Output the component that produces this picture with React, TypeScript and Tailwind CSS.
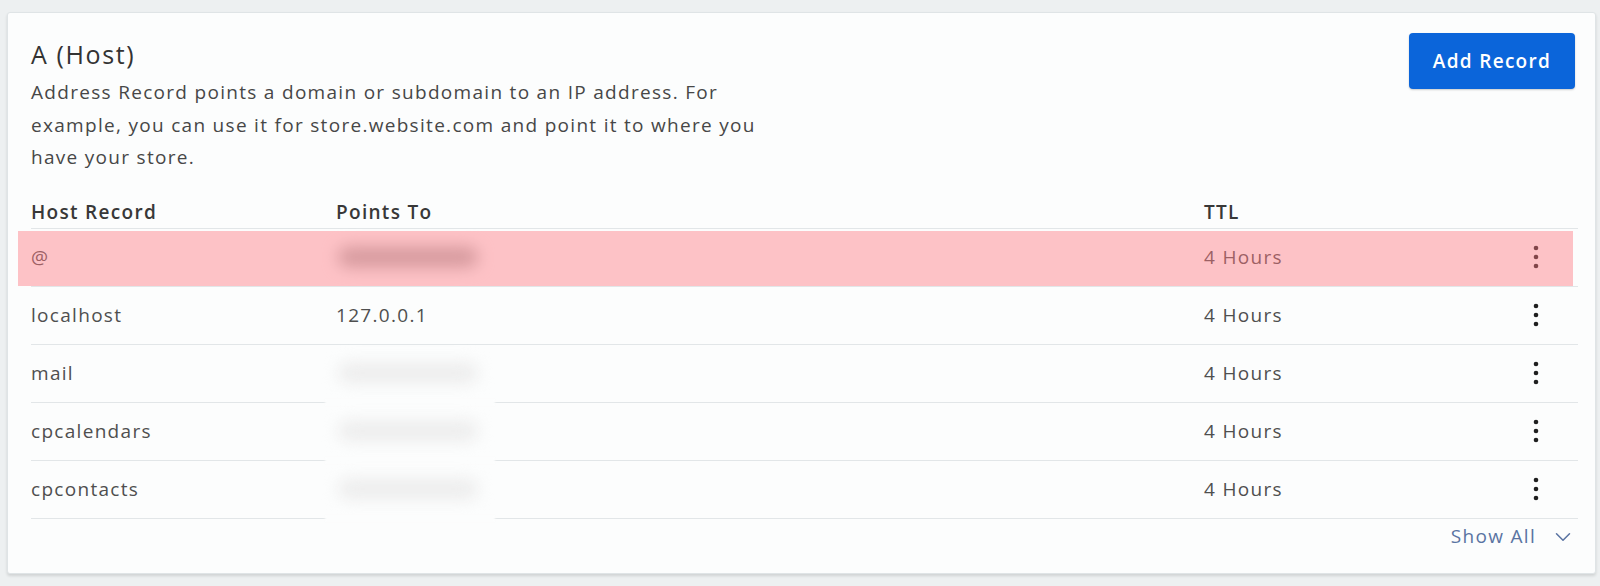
import { ChevronDown } from 'lucide-react';

type DnsRecord = {
  host: string;
  pointsTo: string | null; // null = redacted in the capture
  ttl: string;
  flagged?: boolean;
};

const records: DnsRecord[] = [
  { host: '@', pointsTo: null, ttl: '4 Hours', flagged: true },
  { host: 'localhost', pointsTo: '127.0.0.1', ttl: '4 Hours' },
  { host: 'mail', pointsTo: null, ttl: '4 Hours' },
  { host: 'cpcalendars', pointsTo: null, ttl: '4 Hours' },
  { host: 'cpcontacts', pointsTo: null, ttl: '4 Hours' },
];

const cols = 'grid grid-cols-[305px_868px_290px_84px]';

function KebabIcon() {
  return (
    <svg width="6" height="24" viewBox="0 0 6 24" aria-hidden="true">
      <circle cx="3" cy="3" r="2.3" fill="#1f1f1f" />
      <circle cx="3" cy="12" r="2.3" fill="#1f1f1f" />
      <circle cx="3" cy="21" r="2.3" fill="#1f1f1f" />
    </svg>
  );
}

function RecordRow({ rec }: { rec: DnsRecord }) {
  return (
    <div className={`relative ${cols} h-[58px] border-b border-[#e2e6e8]`}>
      <div className="flex items-center">{rec.host}</div>
      <div className="relative flex items-center">
        {rec.pointsTo ?? (
          <>
            <span
              className={`ml-[2px] h-[20px] w-[140px] rounded-full blur-[8px] ${rec.flagged ? 'bg-[#b4b4b4]' : 'bg-[#ececec]'}`}
            />
            {/* redaction smear hides the row divider under the blurred value */}
            {!rec.flagged && (
              <span className="absolute -bottom-[4px] left-[-11px] h-[7px] w-[170px] bg-[#fcfdfd] blur-[1px]" />
            )}
          </>
        )}
      </div>
      <div className="flex items-center">{rec.ttl}</div>
      <div className="flex items-center justify-center">
        <button type="button" aria-label="Record actions" className="flex items-center">
          <KebabIcon />
        </button>
      </div>
      {rec.flagged && (
        <div className="pointer-events-none absolute top-[2px] bottom-0 left-[-13px] right-[5px] bg-[rgba(255,118,128,0.44)]" />
      )}
    </div>
  );
}

export default function App() {
  return (
    <div className="min-h-screen bg-[#edf0f1] pt-[12px] pl-[7px] pr-[4px] font-['Open_Sans',sans-serif]">
      <div className="rounded-[3px] border border-[#dfe4e6] bg-[#fcfdfd] pt-[20px] pr-[17px] pb-[18px] pl-[23px] shadow-[0_2px_3px_rgba(0,0,0,0.12)]">
        {/* Header */}
        <div className="flex items-start justify-between">
          <div className="mt-[5px] w-[740px]">
            <h2 className="text-[25px] leading-[32px] tracking-[1.6px] text-[#333]">A (Host)</h2>
            <p className="mt-[6px] text-[19px] leading-[32.5px] tracking-[1.3px] text-[#474747]">
              Address Record points a domain or subdomain to an IP address. For example, you can use it for
              store.website.com and point it to where you have your store.
            </p>
          </div>
          <button
            type="button"
            className="mr-[3px] h-[56px] w-[166px] rounded-[4px] bg-[#0b65da] text-[19px] font-semibold tracking-[1.3px] text-white shadow-[0_1px_2px_rgba(0,0,0,0.2)]"
          >
            Add Record
          </button>
        </div>

        {/* Table */}
        <div className="mt-[23px] text-[19px] tracking-[1.3px] text-[#4f4f4f]">
          <div className={`${cols} h-[32px] items-center border-b border-[#e2e6e8] font-semibold text-[#383838]`}>
            <div>Host Record</div>
            <div>Points To</div>
            <div>TTL</div>
            <div />
          </div>
          {records.map((rec) => (
            <RecordRow key={rec.host} rec={rec} />
          ))}
          <div className="flex h-[36px] items-center justify-end pr-[2px]">
            <button type="button" className="flex items-center gap-[14px] text-[#5a74a2]">
              Show All
              <ChevronDown size={26} strokeWidth={1.4} className="text-[#5a74a2]" />
            </button>
          </div>
        </div>
      </div>
    </div>
  );
}
